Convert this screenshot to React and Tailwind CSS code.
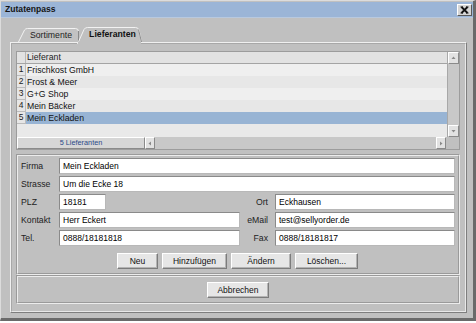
import React from "react";

const rows = ["Frischkost GmbH", "Frost & Meer", "G+G Shop", "Mein Bäcker", "Mein Eckladen"];

function Btn({ w, children }) {
  return (
    <div
      className={`${w} h-[16px] flex items-center justify-center bg-[#e6e6e6] border border-t-white border-l-white border-r-[#7c7c7c] border-b-[#7c7c7c] shadow-[inset_-1px_-1px_0_#b4b4b4] text-[8.5px] text-[#111]`}
    >
      {children}
    </div>
  );
}

function Field({ value, cls = "" }) {
  return (
    <div
      className={`h-[16px] bg-white border border-t-[#8a8a8a] border-l-[#8a8a8a] border-r-[#b8b8b8] border-b-[#b8b8b8] flex items-center pl-[3px] text-[8.5px] text-black ${cls}`}
    >
      {value}
    </div>
  );
}

function Label({ children, right }) {
  return (
    <div className={`h-[16px] flex items-center text-[8.7px] text-[#222] ${right ? "justify-end pr-[7px]" : "pl-[1px]"}`}>
      {children}
    </div>
  );
}

function Arrow({ dir }) {
  const paths = {
    up: "M1.5,4 L3.5,1.5 L5.5,4 Z",
    down: "M1.5,2 L3.5,4.5 L5.5,2 Z",
    left: "M4,1.5 L1.5,3.5 L4,5.5 Z",
    right: "M2,1.5 L4.5,3.5 L2,5.5 Z",
  };
  return (
    <svg width="7" height="7" viewBox="0 0 7 7">
      <path d={paths[dir]} fill="#8a8a8a" />
    </svg>
  );
}

function ScrollBtn({ dir, cls = "" }) {
  return (
    <div className={`flex items-center justify-center bg-[#e2e2e2] border border-t-white border-l-white border-r-[#8a8a8a] border-b-[#8a8a8a] ${cls}`}>
      <Arrow dir={dir} />
    </div>
  );
}

export default function App() {
  return (
    <div className="w-[476px] h-[323px] bg-white font-['Liberation_Sans',Arial,sans-serif] leading-none">
      <div className="w-[476px] h-[321px] bg-[#c0c0c0] border-t border-l border-t-[#dcdcdc] border-l-[#dcdcdc] border-r-[3px] border-b-[3px] border-r-[#6a6a6a] border-b-[#6a6a6a] flex flex-col">
        {/* title bar */}
        <div className="h-[16px] mt-[1px] bg-[#9bb5d7] border-b border-[#b8c9df] flex items-center justify-between pl-[4px] pr-[1px]">
          <span className="text-[8.6px] font-bold text-[#141414]">Zutatenpass</span>
          <div className="w-[15px] h-[12px] bg-[#d6d6d6] border border-t-white border-l-white border-r-[#5a5a5a] border-b-[#5a5a5a] flex items-center justify-center">
            <svg width="9" height="8" viewBox="0 0 9 8">
              <path d="M1.5,1 L7.5,7 M7.5,1 L1.5,7" stroke="#111" strokeWidth="1.8" />
              <path d="M0.5,1 L3,1 M6,1 L8.5,1 M0.5,7 L3,7 M6,7 L8.5,7" stroke="#111" strokeWidth="1" />
            </svg>
          </div>
        </div>

        {/* tabs */}
        <div className="flex items-end h-[16px] mt-[8px] pl-[17px] relative z-10">
          <div className="relative w-[61px] h-[14px] flex items-center justify-center pl-[5px]">
            <svg className="absolute inset-0" width="61" height="14" viewBox="0 0 61 14">
              <path d="M0.5,14 L6.5,2 Q7.5,0.5 9.5,0.5 L57.5,0.5 Q60.5,0.5 60.5,3.5 L60.5,14" fill="#c2c2c2" stroke="#f2f2f2" strokeWidth="1" />
              <path d="M60.5,3 L60.5,14" stroke="#8a8a8a" strokeWidth="1" />
            </svg>
            <span className="relative text-[8.7px] text-[#222] mt-[1px]">Sortimente</span>
          </div>
          <div className="relative w-[65px] h-[17px] -ml-[2px] -mb-[2px] flex items-center justify-center pl-[6px] pb-[2px]">
            <svg className="absolute inset-0" width="65" height="17" viewBox="0 0 65 17">
              <path d="M0.5,17 L7,2.5 Q8,0.5 10.5,0.5 L58.5,0.5 Q61,0.5 62,3 L64.5,15" fill="#c0c0c0" stroke="#f2f2f2" strokeWidth="1" />
              <path d="M61.5,2.5 L64.5,15" stroke="#8a8a8a" strokeWidth="1" />
              <rect x="1" y="14.5" width="63" height="3" fill="#c0c0c0" />
            </svg>
            <span className="relative text-[8.7px] font-bold text-[#111]">Lieferanten</span>
          </div>
        </div>

        {/* panel */}
        <div className="ml-[9px] w-[457px] h-[271px] border border-t-[#f0f0f0] border-l-[#f0f0f0] border-r-[#7e7e7e] border-b-[#7e7e7e]">
          <div className="h-full border border-t-[#a8a8a8] border-l-[#a8a8a8] border-r-[#e8e8e8] border-b-[#e8e8e8] pl-[4px] pr-[5px] pt-[7px] pb-[5px] flex flex-col">
            {/* table */}
            <div className="h-[99px] border border-[#9c9c9c] flex flex-col">
              <div className="flex h-[85px]">
                <div className="flex-1 flex flex-col bg-[#e8e8e8]">
                  <div className="flex h-[12px] bg-[#e2e2e2] border-b border-[#a4a4a4]">
                    <div className="w-[9px] border-r border-[#b8b8b8]" />
                    <div className="pl-[1px] flex items-center text-[8.7px] text-[#222]">Lieferant</div>
                  </div>
                  {rows.map((r, i) => (
                    <div key={r} className="flex h-[12px]">
                      <div className="w-[9px] bg-[#e6e6e6] border-r border-b border-[#bcbcbc] flex items-center justify-center text-[8.5px] text-[#222]">
                        {i + 1}
                      </div>
                      <div
                        className={`flex-1 flex items-center pl-[1px] text-[8.7px] text-[#111] ${
                          i === 4 ? "bg-[#98b4d4]" : i % 2 === 0 ? "bg-[#efefef]" : "bg-[#e7e7e7]"
                        }`}
                      >
                        {r}
                      </div>
                    </div>
                  ))}
                  <div className="flex-1 bg-[#e9e9e9]" />
                </div>
                <div className="w-[12px] flex flex-col bg-[#c8c8c8] border-l border-[#a8a8a8]">
                  <ScrollBtn dir="up" cls="h-[12px]" />
                  <div className="flex-1" />
                  <ScrollBtn dir="down" cls="h-[12px]" />
                </div>
              </div>
              <div className="flex h-[12px] bg-[#c8c8c8]">
                <div className="w-[128px] bg-[#d6d6d6] border border-t-white border-l-white border-r-[#8a8a8a] border-b-[#8a8a8a] flex items-center justify-center text-[7.3px] text-[#2c4a88]">
                  5 Lieferanten
                </div>
                <ScrollBtn dir="left" cls="w-[10px]" />
                <div className="flex-1" />
                <ScrollBtn dir="right" cls="w-[10px]" />
                <div className="w-[13px] bg-[#c0c0c0]" />
              </div>
            </div>

            {/* form box */}
            <div className="mt-[4px] border border-t-[#9a9a9a] border-l-[#9a9a9a] border-r-[#ececec] border-b-[#ececec]">
              <div className="border border-t-[#ececec] border-l-[#ececec] border-r-[#9a9a9a] border-b-[#9a9a9a] pl-[2px] pr-[3px] pt-[2px] pb-[4px]">
                <div className="grid grid-cols-[39px_181px_35px_180px] gap-y-[2px]">
                  <Label>Firma</Label>
                  <Field value="Mein Eckladen" cls="col-span-3" />
                  <Label>Strasse</Label>
                  <Field value="Um die Ecke 18" cls="col-span-3" />
                  <Label>PLZ</Label>
                  <div>
                    <Field value="18181" cls="w-[47px]" />
                  </div>
                  <Label right>Ort</Label>
                  <Field value="Eckhausen" />
                  <Label>Kontakt</Label>
                  <Field value="Herr Eckert" />
                  <Label right>eMail</Label>
                  <Field value="test@sellyorder.de" />
                  <Label>Tel.</Label>
                  <Field value="0888/18181818" />
                  <Label right>Fax</Label>
                  <Field value="0888/18181817" />
                </div>
                <div className="flex justify-center gap-[4px] mt-[7px]">
                  <Btn w="w-[41px]">Neu</Btn>
                  <Btn w="w-[65px]">Hinzufügen</Btn>
                  <Btn w="w-[60px]">Ändern</Btn>
                  <Btn w="w-[63px]">Löschen...</Btn>
                </div>
              </div>
            </div>

            {/* bottom box */}
            <div className="border border-t-[#9a9a9a] border-l-[#9a9a9a] border-r-[#ececec] border-b-[#ececec]">
              <div className="border border-t-[#ececec] border-l-[#ececec] border-r-[#9a9a9a] border-b-[#9a9a9a] pt-[5px] pb-[4px] flex justify-center">
                <Btn w="w-[62px]">Abbrechen</Btn>
              </div>
            </div>
          </div>
        </div>
      </div>
    </div>
  );
}
